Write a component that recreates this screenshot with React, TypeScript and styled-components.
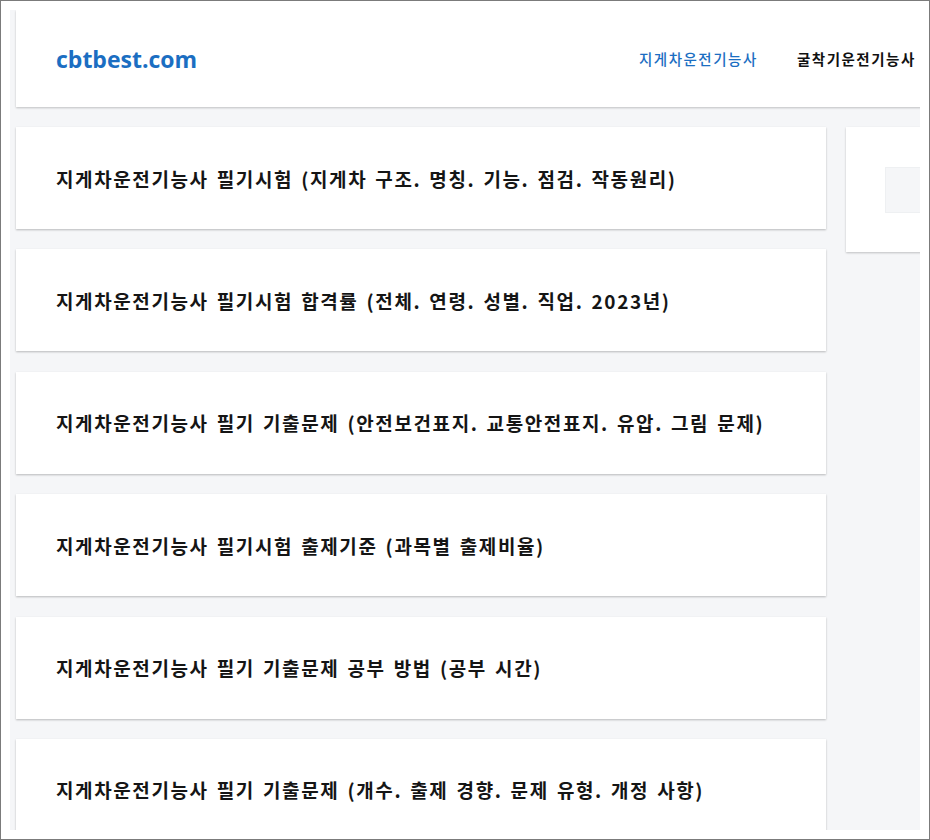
import styled, { createGlobalStyle } from "styled-components";

const GlobalStyle = createGlobalStyle`
    html, body {
        margin: 0;
        padding: 0;
        background: #ffffff;
    }
    * {
        box-sizing: border-box;
    }
`;

const Frame = styled.div`
    width: 930px;
    height: 840px;
    border: 1px solid #7b7b7b;
    padding: 9px;
    background: #ffffff;
    font-family: "Noto Sans CJK KR", "Noto Sans", sans-serif;
`;

const Viewport = styled.div`
    width: 910px;
    height: 820px;
    overflow: hidden;
    background: #f5f6f8;
`;

const Page = styled.div`
    width: 1000px;
    padding-left: 6px;
`;

const Header = styled.header`
    height: 97px;
    background: #ffffff;
    display: flex;
    align-items: center;
    padding-left: 40px;
    box-shadow: 0 1px 2px rgba(0, 0, 0, 0.22);
    margin-bottom: 20px;
`;

const Logo = styled.a`
    font-family: "Open Sans", "Noto Sans", sans-serif;
    font-size: 23px;
    font-weight: 700;
    color: #1b6ec2;
    text-decoration: none;
    width: 142px;
    white-space: nowrap;
`;

const Nav = styled.nav`
    display: flex;
    gap: 40px;
    margin-left: 441px;
`;

const NavItem = styled.a<{ $active?: boolean }>`
    width: 118px;
    font-size: 14.5px;
    font-weight: ${(p) => (p.$active ? 500 : 600)};
    letter-spacing: 1.5px;
    color: ${(p) => (p.$active ? "#1b6ec2" : "#111111")};
    text-decoration: none;
    white-space: nowrap;
`;

const Main = styled.div`
    display: grid;
    grid-template-columns: 810px 200px;
    gap: 20px;
    align-items: start;
`;

const List = styled.div`
    display: flex;
    flex-direction: column;
    gap: 20.4px;
`;

const Card = styled.article`
    height: 102px;
    background: #ffffff;
    display: flex;
    align-items: center;
    padding-left: 40px;
    box-shadow: 0 1px 2px rgba(0, 0, 0, 0.25);
`;

const CardTitle = styled.h2`
    margin: 0;
    font-size: 19px;
    font-weight: 700;
    color: #151515;
    letter-spacing: 1.6px;
    word-spacing: 2.2px;
    white-space: nowrap;
`;

const Sidebar = styled.aside`
    height: 125px;
    background: #ffffff;
    padding: 40px 39px;
    box-shadow: 0 1px 2px rgba(0, 0, 0, 0.22);
`;

const SearchBox = styled.div`
    height: 46px;
    background: #f5f6f8;
    border: 1px solid #eef0f2;
`;

const posts = [
    "지게차운전기능사 필기시험 (지게차 구조. 명칭. 기능. 점검. 작동원리)",
    "지게차운전기능사 필기시험 합격률 (전체. 연령. 성별. 직업. 2023년)",
    "지게차운전기능사 필기 기출문제 (안전보건표지. 교통안전표지. 유압. 그림 문제)",
    "지게차운전기능사 필기시험 출제기준 (과목별 출제비율)",
    "지게차운전기능사 필기 기출문제 공부 방법 (공부 시간)",
    "지게차운전기능사 필기 기출문제 (개수. 출제 경향. 문제 유형. 개정 사항)",
];

const App = () => {
    return (
        <>
            <GlobalStyle />
            <Frame>
                <Viewport>
                    <Page>
                        <Header>
                            <Logo href="#">cbtbest.com</Logo>
                            <Nav>
                                <NavItem $active href="#">
                                    지게차운전기능사
                                </NavItem>
                                <NavItem href="#">굴착기운전기능사</NavItem>
                            </Nav>
                        </Header>
                        <Main>
                            <List>
                                {posts.map((title) => (
                                    <Card key={title}>
                                        <CardTitle>{title}</CardTitle>
                                    </Card>
                                ))}
                            </List>
                            <Sidebar>
                                <SearchBox />
                            </Sidebar>
                        </Main>
                    </Page>
                </Viewport>
            </Frame>
        </>
    );
};

export default App;
